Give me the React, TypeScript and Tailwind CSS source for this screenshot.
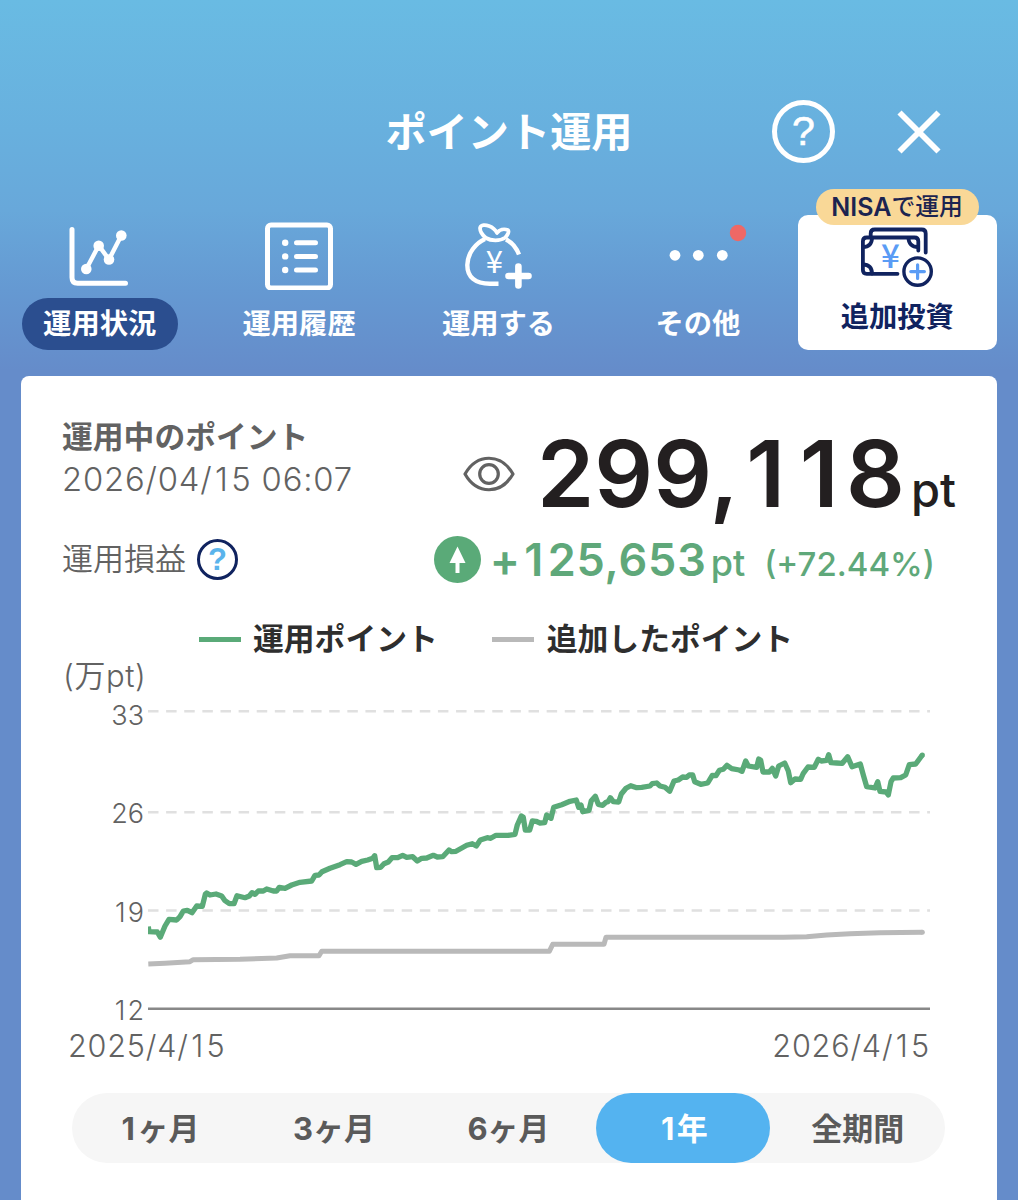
import React from "react";

const operationPoints =
  "148.3,926.5 149,931.7 157.3,932 160.3,937.3 165,926 169,919.3 176.7,920 180,916.7 183.3,911 187.3,910.3 192,912.7 196.7,906 202.3,906.3 205.3,894.3 206.7,893 210,895 216,894 221.7,896 225,900.7 229.3,903.7 234,903.7 237,895.7 245,897.7 249.3,896 252,892.7 255,894.3 258.3,891 263.3,891 266.7,889 273.3,891 276.7,891 279.3,887.3 285,888.3 291.7,885 300,882.3 311.7,881 315,875.3 319,875 322,871.7 330,868.3 340,864.7 346.7,861.7 351.7,862 356,864.3 361.7,861.3 367.7,860 372.7,858.3 374.7,855.7 376.7,867.7 380.7,867.3 384,863.7 388.3,862 392,857.7 397.7,857.7 402.7,855.3 406.7,857.3 412.7,856.7 417.3,861 421.7,858.3 426.7,858 433.3,855.3 437.3,857 442.7,856.7 449,850 451.7,851.7 456,851.3 466.7,845.3 472.3,843.7 476.3,846 480.3,840 487.3,837.7 490.7,838.3 496,835.3 508.3,835.3 515,834.3 517.3,825 521.3,816 523.3,817.3 525.3,830 529.7,830 532.3,821 536,821.3 540,823 544.7,822.7 546.7,815 551,818.3 553.7,807.3 561.7,804.7 570,801.3 576.3,800 578.7,807.3 581,805 582.7,811.7 589,810.3 591.3,800.7 595.3,796.3 598.3,804.3 602.7,805.3 606,802.3 608,801.7 610.3,797.7 613.3,801.7 618.7,802 621.3,794 626,788.3 630.7,785.7 636.7,787.7 641.7,787.3 650,786 652.3,783.7 656.7,783 660,786 665,787.3 669.7,791.3 674,781 678.3,780 682.7,777 686.7,777.3 689.3,775 692.7,775 694.7,781.7 700.7,784.3 707.7,783 712.3,775.3 716,775.7 719.3,770.3 723.3,769.3 727,765.3 731.7,768.7 739.3,770 742,771.3 745.7,761 748.3,766 756.7,767.3 758.7,759 760.7,760.3 763,772 769.3,772 772.3,768.3 775.7,776 778.7,766 784.7,763 788.3,771 790.7,782.7 795,779 800.7,779.3 803.3,773.3 808,767 814.3,767.3 818.3,759.3 821.3,761 826.7,760.3 828.7,754.7 831,762.7 836.7,763 842.3,763.3 847.7,756.7 852,766.7 860.3,764 863.3,775 866.7,786.7 875,788 877.7,781.7 880,791.3 886,792 888.3,795 891,781.7 893.3,778 900.7,777.7 905.7,775 909.3,764.7 915.7,764 922.3,755";

const addedPoints =
  "148.3,964 165,963.3 190,961.7 193.3,959.7 240,959.3 276.7,958 290,955.7 319,955.7 321.7,951.3 549.3,951.3 552.7,944.3 604,944.3 606,937.3 783.3,937.3 806.7,936.7 826.7,935 850,933.8 880,932.7 922.3,932.3";

const ranges = ["1ヶ月", "3ヶ月", "6ヶ月", "1年", "全期間"];

// the proportional "1" is narrow, so pad it out to the width of the other digits
const Num = ({ value }: { value: string }) => (
  <>
    {value.split(/(1)/).map((part, i) =>
      part === "1" ? (
        <span key={i} className="pl-[0.08em] pr-[0.08em]">
          1
        </span>
      ) : (
        part
      )
    )}
  </>
);

const StatusIcon = () => (
  <svg width="64" height="64" viewBox="68 224 64 64" fill="none" stroke="white" strokeLinecap="round">
    <path d="M72 229.5V277.5Q72 283.2 77.7 283.2H125.5" strokeWidth="5" />
    <path d="M86.3 269L98.7 245.5L109 259.5L121.3 235.5" strokeWidth="4.4" />
    <g fill="white" stroke="none">
      <circle cx="86.3" cy="269" r="5.3" />
      <circle cx="98.7" cy="245.7" r="5.3" />
      <circle cx="109" cy="259.5" r="5.3" />
      <circle cx="121.3" cy="235.5" r="5.3" />
    </g>
  </svg>
);

const HistoryIcon = () => (
  <svg width="68" height="68" viewBox="265 222 68 68" fill="none" stroke="white" strokeWidth="5" strokeLinecap="round">
    <rect x="267.5" y="225" width="63" height="63" rx="3.5" />
    <path d="M296.5 242.8H315.5M296.5 256.4H315.5M296.5 270H315.5" />
    <g fill="white" stroke="none">
      <circle cx="285.2" cy="242.8" r="3.2" />
      <circle cx="285.2" cy="256.4" r="3.2" />
      <circle cx="285.2" cy="270" r="3.2" />
    </g>
  </svg>
);

const BagIcon = () => (
  <svg width="72" height="72" viewBox="462 220 72 72" fill="none" stroke="white">
    <path d="M485 239C476 243 467.5 253 467.3 265C467.3 277 475 283.7 490 283.7H498.5" strokeWidth="4.4" />
    <path d="M506 239.5C512 242.5 516 247 519 254.5" strokeWidth="4.4" />
    <path
      d="M486 238C482 235 479.5 230.5 480.2 227.5C481 224.5 485.5 224.6 489 226C493 227.5 495.5 230 497 233C499.5 229.5 504 228.5 507.8 230C509.6 231.5 507.5 235.5 505 237.8C500 241.2 491 241 486 238Z"
      strokeWidth="3.8"
      strokeLinejoin="round"
    />
    <path d="M518.4 266.5V285.5M508.5 276H528.5" strokeWidth="6.6" strokeLinecap="round" />
    <text x="494.4" y="272.5" textAnchor="middle" fontSize="31" fill="white" stroke="none" className="font-['Noto_Sans_CJK_JP',sans-serif] font-normal">
      ¥
    </text>
  </svg>
);

const DotsIcon = () => (
  <svg width="98" height="72" viewBox="649 220 98 72" fill="white">
    <circle cx="675" cy="255.3" r="5.4" />
    <circle cx="698.3" cy="255.3" r="5.4" />
    <circle cx="722.3" cy="255.3" r="5.4" />
    <circle cx="738" cy="233" r="8.2" fill="#ee6866" />
  </svg>
);

const MoneyIcon = () => (
  <svg width="76" height="64" viewBox="859 226 76 64" fill="none" stroke="#10235f" strokeWidth="3.8" strokeLinecap="round">
    <path d="M870.7 236V233.5Q870.7 229.5 874.7 229.5H921.7Q925.7 229.5 925.7 233.5V252.5" />
    <path d="M918.3 250.5V241.3Q918.3 237.5 914.5 237.5H866.7Q862.9 237.5 862.9 241.3V270Q862.9 273.8 866.7 273.8H897.5" />
    <path d="M863 247C869 247 872 243.5 872 238M908.5 238C908.5 243.5 912 247 918 247M863 264.5C869 264.5 872 268 872 273.5" />
    <circle cx="917.6" cy="271.6" r="13.7" strokeWidth="3.4" />
    <path d="M917.6 264.8V278.4M910.8 271.6H924.4" stroke="#5a9cf5" strokeWidth="3.2" />
    <text x="890.5" y="267.5" textAnchor="middle" fontSize="33" fill="#5a9cf5" stroke="none" className="font-['Noto_Sans_CJK_JP',sans-serif] font-medium">
      ¥
    </text>
  </svg>
);

const tabs = [
  { label: "運用状況", icon: <StatusIcon />, active: true },
  { label: "運用履歴", icon: <HistoryIcon />, active: false },
  { label: "運用する", icon: <BagIcon />, active: false },
  { label: "その他", icon: <DotsIcon />, active: false },
];

const Header = () => (
  <header className="grid grid-cols-[1fr_auto_1fr] items-center h-[189px] pt-[74px]">
    <div />
    <h1 className="pt-px text-[41.2px] leading-[60px] font-bold text-white">ポイント運用</h1>
    <div className="flex items-center justify-end pr-[77px]">
      <button className="flex items-center justify-center w-[63px] h-[63px] mr-[62px] rounded-full border-[5px] border-white text-white font-['Liberation_Sans',sans-serif] text-[41px] leading-none [-webkit-text-stroke:0.6px_white]">
        ?
      </button>
      <svg width="44" height="44" viewBox="0 0 44 44" stroke="white" strokeWidth="5.8">
        <path d="M2.5 2.5L41.5 41.5M41.5 2.5L2.5 41.5" />
      </svg>
    </div>
  </header>
);

const Tabs = () => (
  <nav className="grid grid-cols-5 h-[161px] pr-[21px]">
    {tabs.map((tab) => (
      <div key={tab.label} className="flex flex-col items-center pt-[31px]">
        <div className="flex items-center justify-center h-[72px]">{tab.icon}</div>
        <span
          className={`flex items-center justify-center mt-[6px] h-[52px] w-[156px] pt-px rounded-full text-[28.3px] leading-none font-bold text-white ${
            tab.active ? "bg-[#2b4e8f]" : ""
          }`}
        >
          {tab.label}
        </span>
      </div>
    ))}
    <div className="relative flex flex-col items-center mt-[26px] h-[135px] pt-[11px] rounded-[10px] bg-white text-[#10235f]">
      <span className="absolute -top-[26px] left-[18px] flex items-center justify-center w-[163px] h-[36px] rounded-full bg-[#f9d897] text-[23.8px] leading-none font-medium text-[#1c2450]">
        <span className="text-[25px] font-semibold">NISA</span>で運用
      </span>
      <MoneyIcon />
      <span className="mt-[11px] text-[28.3px] leading-[32px] font-bold">追加投資</span>
    </div>
  </nav>
);

const Summary = () => (
  <section className="flex justify-between h-[234px] text-[#626262]">
    <div className="pl-[41px] pt-[40px]">
      <p className="text-[30.8px] leading-[42px] font-bold">運用中のポイント</p>
      <p className="text-[32.8px] leading-[42px] font-[350] tracking-[0.8px]">
        <Num value="2026/04/15 06:07" />
      </p>
      <div className="flex items-center gap-[11px] mt-[38px] h-[42px]">
        <span className="text-[31px] font-[350]">運用損益</span>
        <span className="flex items-center justify-center w-[41px] h-[41px] rounded-full border-[3px] border-[#10235f] font-['Liberation_Sans',sans-serif] text-[31px] leading-none font-bold text-[#5ab4ec]">
          ?
        </span>
      </div>
    </div>
    <div className="pt-[54px]">
      <div className="flex items-center h-[87px] pr-[41px] justify-end text-[#231f20]">
        <svg className="mr-[22px]" width="52" height="36" viewBox="0 0 52 36" fill="none" stroke="#626262" strokeWidth="3.2">
          <path d="M2 18C14 -3 38 -3 50 18C38 39 14 39 2 18Z" strokeLinejoin="round" />
          <circle cx="26" cy="18" r="9.3" />
        </svg>
        <div className="flex items-baseline leading-none">
          <span className="text-[92px] font-semibold">
            <Num value="299,118" />
          </span>
          <span className="ml-[6px] text-[47px] font-medium">pt</span>
        </div>
      </div>
      <div className="flex items-center justify-end h-[84px] pr-[62px] text-[#5fa87a]">
        <svg className="mr-[9px]" width="47" height="47" viewBox="0 0 47 47">
          <circle cx="23.5" cy="23.5" r="23.5" fill="#5aaa78" />
          <path d="M23.5 10.5L31.5 27H25.5V37H21.5V27H15.5Z" fill="white" />
        </svg>
        <div className="flex items-baseline leading-none font-medium">
          <span className="text-[45px] font-semibold tracking-[0.8px]">
            <Num value="+125,653" />
          </span>
          <span className="ml-[4px] text-[36px]">pt</span>
          <span className="ml-[19px] text-[33px]">(+72.44%)</span>
        </div>
      </div>
    </div>
  </section>
);

const Chart = () => (
  <section className="mt-[8px] text-[#626262]">
    <div className="flex items-center h-[42px] pl-[178px] text-[30.8px] font-bold text-[#2e2e2e]">
      <span className="w-[42px] h-[5px] mr-[12px] bg-[#5aaa78]" />
      運用ポイント
      <span className="w-[42px] h-[5px] ml-[54px] mr-[13px] bg-[#b9b9b9]" />
      追加したポイント
    </div>
    <p className="pl-[42px] h-[40px] text-[31px] leading-[32px] font-[350] tracking-[0.6px]">(万pt)</p>
    <div className="flex h-[326px]">
      <div className="flex flex-col w-[127px] pr-[4px] pt-px text-right text-[27px] leading-[30px] font-[350]">
        <span className="h-[98.5px]">33</span>
        <span className="h-[98.5px]">26</span>
        <span className="h-[98.5px]">
          <Num value="19" />
        </span>
        <span>
          <Num value="12" />
        </span>
      </div>
      <svg width="784" height="320" viewBox="148 700 784 320" fill="none">
        <g stroke="#e0e0e0" strokeWidth="2.4" strokeDasharray="10.5 7.62">
          <path d="M148 711.2H930" />
          <path d="M148 812.2H930" />
          <path d="M148 910.5H930" />
        </g>
        <path d="M148 1008.8H930" stroke="#888888" strokeWidth="2.4" />
        <polyline points={addedPoints} stroke="#b9b9b9" strokeWidth="5" strokeLinejoin="round" />
        <circle cx="922.3" cy="932.3" r="2.5" fill="#b9b9b9" />
        <polyline points={operationPoints} stroke="#5aaa78" strokeWidth="5.3" strokeLinejoin="round" />
        <circle cx="922.3" cy="755" r="2.6" fill="#5aaa78" />
      </svg>
    </div>
    <div className="flex justify-between pl-[47px] pr-[67px] text-[30.6px] leading-[40px] font-[350] tracking-[0.8px]">
      <span>
        <Num value="2025/4/15" />
      </span>
      <span>
        <Num value="2026/4/15" />
      </span>
    </div>
  </section>
);

const App = () => {
  const [range, setRange] = React.useState("1年");

  return (
    <div className="w-[1018px] h-[1200px] overflow-hidden flex flex-col bg-[#658cca] bg-[linear-gradient(to_bottom,#69bbe3_0px,#68b0de_130px,#68a8da_210px,#6599d2_290px,#658cca_370px)] font-['Inter','Noto_Sans_CJK_JP',sans-serif]">
      <Header />
      <Tabs />
      <main className="mt-[26px] mx-[21px] flex-1 rounded-t-[8px] bg-white">
        <Summary />
        <Chart />
        <div className="grid grid-cols-5 mt-[27px] ml-[51px] mr-[52px] h-[70px] rounded-full bg-[#f6f6f6]">
          {ranges.map((item) => (
            <button
              key={item}
              onClick={() => setRange(item)}
              className={`rounded-full text-[31px] leading-none font-bold ${
                range === item ? "bg-[#54b3f0] text-white" : "text-[#5a5a5a]"
              }`}
            >
              <Num value={item} />
            </button>
          ))}
        </div>
      </main>
    </div>
  );
};

export default App;
